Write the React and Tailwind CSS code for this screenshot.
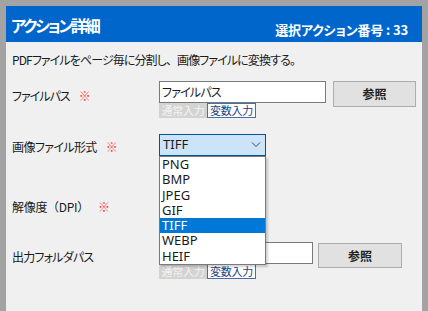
import { useState } from 'react';

const options = ['PNG', 'BMP', 'JPEG', 'GIF', 'TIFF', 'WEBP', 'HEIF'];

function Required() {
    return <span className="ml-[9px] tracking-normal text-[#ff3b3b] text-[12px]">※</span>;
}

function InputTabs() {
    return (
        <div className="flex h-[15px] text-[11px] leading-[13px] tracking-[-0.3px]">
            <span className="w-[48px] bg-[#d3d3d3] text-[#f4f4f4] flex items-center justify-center">通常入力</span>
            <span className="w-[49px] bg-white border border-[#4a6ea8] text-[#1e3f7c] flex items-center justify-center">変数入力</span>
        </div>
    );
}

function BrowseButton({ className }) {
    return (
        <button className={"bg-[#e1e1e1] border border-[#adadad] text-[12px] font-bold text-[#222] flex items-center justify-center " + className}>
            参照
        </button>
    );
}

export default function App() {
    const [selected] = useState('TIFF');

    return (
        <div className="w-[428px] h-[311px] overflow-hidden bg-[#a3a3a3] pt-[6px] px-[6px] font-['Noto_Sans_CJK_JP',sans-serif] [font-feature-settings:'palt'] text-[#1a1a1a]">
            <div className="relative h-full bg-[#f0f0f0]">
                {/* Header */}
                <div className="h-[36px] bg-[#0066cc] flex justify-between px-[5px] text-white font-bold">
                    <span className="text-[16px] leading-[20px] pt-[9px] tracking-[-2.2px]">アクション詳細</span>
                    <span className="text-[13px] leading-[16px] pt-[16px] pr-[9px] tracking-[-0.2px]">
                        選択アクション番号<span className="mx-[3px]">:</span>33
                    </span>
                </div>

                <p className="mt-[9px] pl-[6px] text-[12px] leading-[18px] tracking-[-0.9px]">
                    PDFファイルをページ毎に分割し<span className="[font-feature-settings:normal]">、</span>画像ファイルに変換する。
                </p>

                {/* ファイルパス */}
                <div className="mt-[12px] flex pl-[6px]">
                    <div className="w-[147px] pt-[6px] text-[12px] leading-[18px] tracking-[-1px]">ファイルパス<Required /></div>
                    <div>
                        <div className="w-[167px] h-[22px] bg-white border border-[#7a7a7a] text-[12px] leading-[20px] px-[2px] tracking-[-0.8px]">ファイルパス</div>
                        <InputTabs />
                    </div>
                    <BrowseButton className="ml-[7px] w-[83px] h-[26px]" />
                </div>

                {/* 画像ファイル形式 */}
                <div className="mt-[16px] flex pl-[6px]">
                    <div className="w-[147px] pt-[4px] text-[12px] leading-[18px] tracking-[-0.6px]">画像ファイル形式<Required /></div>
                    <div className="w-[107px] h-[22px] bg-[#cce4f7] border border-[#005499] flex items-center justify-between pl-[3px] pr-[4px] font-['Noto_Sans',sans-serif] text-[13px]">
                        <span>{selected}</span>
                        <svg width="10" height="6" viewBox="0 0 10 6" fill="none" stroke="#444" strokeWidth="1">
                            <polyline points="1,0.5 5,4.5 9,0.5" />
                        </svg>
                    </div>
                </div>

                {/* 解像度 */}
                <div className="mt-[37px] flex pl-[6px] h-[37px]">
                    <div className="w-[147px] pt-[5px] text-[12px] leading-[18px] tracking-[-0.3px] [font-feature-settings:normal]">解像度（DPI）<Required /></div>
                    <div className="w-[100px] h-[22px] bg-white border border-[#7a7a7a]" />
                </div>

                {/* 出力フォルダパス */}
                <div className="mt-[12px] flex pl-[6px]">
                    <div className="w-[147px] pt-[6px] text-[12px] leading-[18px] tracking-[-0.8px]">出力フォルダパス</div>
                    <div>
                        <div className="w-[154px] h-[22px] bg-white border border-[#7a7a7a]" />
                        <InputTabs />
                    </div>
                    <BrowseButton className="ml-[5px] mt-[1px] w-[84px] h-[25px]" />
                </div>

                {/* Dropdown list */}
                <ul className="absolute left-[153px] top-[150px] w-[107px] bg-white border border-[#7a7a7a] shadow-[2px_2px_2px_rgba(0,0,0,0.18)] font-['Noto_Sans',sans-serif] text-[13px]">
                    {options.map(opt => (
                        <li
                            key={opt}
                            className={
                                opt === selected
                                    ? "h-[15.3px] leading-[15px] pl-[2px] bg-[#0078d7] text-white"
                                    : "h-[15.3px] leading-[15px] pl-[2px] text-[#1a1a1a]"
                            }
                        >
                            {opt}
                        </li>
                    ))}
                </ul>
            </div>
        </div>
    );
}
